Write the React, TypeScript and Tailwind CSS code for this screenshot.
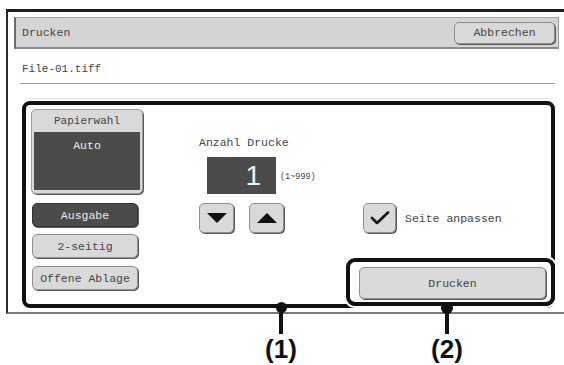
import React from 'react';

const mono = "font-['Liberation_Mono',monospace]";

function GrayButton({ label, dark = false, className = '' }: { label: string; dark?: boolean; className?: string }) {
  return (
    <div
      className={`flex items-center justify-center rounded-[5px] border text-[11.5px] leading-[13px] shadow-[1px_1px_0_#5a5a5a] ${
        dark ? 'bg-[#4b4b4b] border-[#333] text-[#ececec]' : 'bg-[#d9d9d9] border-[#8f8f8f] text-[#444]'
      } ${className}`}
    >
      {label}
    </div>
  );
}

function ArrowButton({ dir }: { dir: 'up' | 'down' }) {
  return (
    <div className="w-[35px] h-[30px] flex items-center justify-center rounded-[5px] border border-[#8f8f8f] bg-[#d9d9d9] shadow-[1px_1px_0_#5a5a5a]">
      <svg width="20" height="10" viewBox="0 0 20 10">
        {dir === 'down' ? <polygon points="0,0 20,0 10,10" fill="#111" /> : <polygon points="0,10 20,10 10,0" fill="#111" />}
      </svg>
    </div>
  );
}

export default function App() {
  return (
    <div className={`relative w-[564px] h-[365px] bg-white overflow-hidden ${mono}`}>
      {/* screen frame */}
      <div className="ml-[6px] mt-[9px] w-[558px] border-l-2 border-t-[3px] border-l-[#2a2a2a] border-t-[#1e1e1e] border-b-2 border-b-[#7a7a7a] pb-[4px]">
        {/* header */}
        <div className="ml-[6px] mr-[5px] mt-[5px] h-[32px] flex items-center justify-between bg-[#d4d4d4] border-l-2 border-l-[#6b6b6b] border-t border-t-[#a8a8a8] border-r border-r-[#9a9a9a] border-b-2 border-b-[#8a8a8a] pl-[6px] pr-[3px]">
          <span className="text-[11.5px] leading-[13px] text-[#444]">Drucken</span>
          <GrayButton label="Abbrechen" className="w-[101px] h-[22px]" />
        </div>

        {/* file name */}
        <div className="ml-[12px] mr-[9px] h-[35px] flex items-end pb-[7px] pl-[2px] border-b border-b-[#9c9c9c]">
          <span className="text-[11px] leading-[13px] text-[#444]">File-01.tiff</span>
        </div>
        <div className="ml-[20px] mr-[15px] mt-[14px] h-px bg-[#dcdcdc]" />

        {/* settings panel */}
        <div className="relative ml-[14px] mt-[2px] w-[533px] h-[207px] border-4 border-[#111] rounded-[8px] flex">
          <div className="ml-[5px] mt-[4px] w-[112px] flex flex-col">
            <div className="h-[85px] rounded-[5px] border border-[#9a9a9a] bg-[#d9d9d9] shadow-[1px_1px_0_#5a5a5a] flex flex-col">
              <div className="h-[22px] flex items-center justify-center text-[11px] leading-[13px] text-[#444]">Papierwahl</div>
              <div className="mx-[2px] mb-[3px] flex-1 bg-[#4b4b4b] flex justify-center pt-[7px] text-[11.5px] leading-[13px] text-[#ececec]">
                Auto
              </div>
            </div>
            <GrayButton label="Ausgabe" dark className="ml-px mt-[9px] w-[106px] h-[24px]" />
            <GrayButton label="2-seitig" className="ml-px mt-[7px] w-[106px] h-[24px]" />
            <GrayButton label="Offene Ablage" className="ml-px mt-[8px] w-[106px] h-[24px]" />
          </div>

          <div className="ml-[56px] flex-1 flex flex-col pr-[5px]">
            <div className="mt-[31px] text-[11.5px] leading-[13px] text-[#444]">Anzahl Drucke</div>
            <div className="mt-[8px] ml-[8px] flex items-center">
              <div className="w-[69px] h-[37px] bg-[#4b4b4b] flex items-center justify-end pr-[15px] font-['Liberation_Sans',sans-serif] font-light text-[28px] leading-none text-[#f0f0f0]">
                1
              </div>
              <span className="ml-[4px] mt-[3px] text-[8.5px] leading-none text-[#444]">(1~999)</span>
            </div>
            <div className="mt-[9px] flex items-center">
              <ArrowButton dir="down" />
              <div className="ml-[15px]">
                <ArrowButton dir="up" />
              </div>
              <div className="ml-[79px] w-[33px] h-[30px] flex items-center justify-center rounded-[5px] border border-[#8f8f8f] bg-[#d9d9d9] shadow-[1px_1px_0_#5a5a5a]">
                <svg width="20" height="14" viewBox="0 0 20 14">
                  <polyline points="2,7 7,12 18,1.5" fill="none" stroke="#111" strokeWidth="2.6" strokeLinecap="round" strokeLinejoin="round" />
                </svg>
              </div>
              <span className="ml-[9px] text-[11.5px] leading-[13px] text-[#444]">Seite anpassen</span>
            </div>
            <GrayButton label="Drucken" className="mt-auto mb-[5px] self-end w-[187px] h-[32px]" />
          </div>

          {/* annotation (2) outline */}
          <div className="absolute left-[320px] top-[153px] w-[209px] h-[48px] border-4 border-[#111] rounded-[9px] shadow-[0_0_0_2px_#fff]" />
        </div>
      </div>

      {/* annotation markers */}
      <div className="absolute left-[276px] top-[302px] w-[11px] h-[11px] rounded-full bg-[#111]" />
      <div className="absolute left-[279px] top-[307px] w-[4px] h-[27px] bg-[#111]" />
      <div className="absolute left-[441px] top-[302px] w-[12px] h-[12px] rounded-full bg-[#111]" />
      <div className="absolute left-[445px] top-[307px] w-[4px] h-[27px] bg-[#111]" />
      <div className="absolute left-[281px] top-[334px] -translate-x-1/2 font-['Liberation_Sans',sans-serif] font-bold text-[26px] leading-[30px] text-[#111]">
        (1)
      </div>
      <div className="absolute left-[447px] top-[334px] -translate-x-1/2 font-['Liberation_Sans',sans-serif] font-bold text-[26px] leading-[30px] text-[#111]">
        (2)
      </div>
    </div>
  );
}
